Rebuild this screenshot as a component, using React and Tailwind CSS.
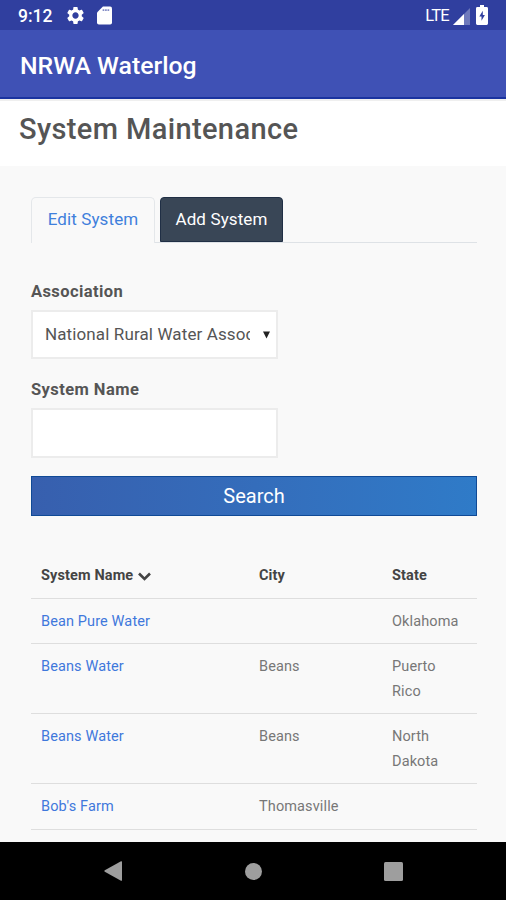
import React, { useState } from "react";
import { MdSettings } from "react-icons/md";

const systems = [
  { name: "Bean Pure Water", city: "", state: "Oklahoma" },
  { name: "Beans Water", city: "Beans", state: "Puerto Rico" },
  { name: "Beans Water", city: "Beans", state: "North Dakota" },
  { name: "Bob's Farm", city: "Thomasville", state: "" },
];

const StatusBar = () => (
  <div className="h-[30px] shrink-0 bg-[#303f9f] pl-[18px] pr-[18px] flex items-center justify-between text-white">
    <div className="flex items-center">
      <span className="w-[47px] pt-[3px] text-[17.5px] leading-none font-medium">9:12</span>
      <MdSettings className="w-[21px] h-[21px]" />
      <svg className="ml-[11px] w-[15px] h-[19px]" viewBox="0 0 16 20">
        <path
          fill="currentColor"
          d="M6.3 0.5H14a2 2 0 0 1 2 2v15a2 2 0 0 1-2 2H2a2 2 0 0 1-2-2V6.8z"
        />
        <path stroke="#303f9f" strokeOpacity="0.6" strokeWidth="1.8" strokeDasharray="1.8 0.8" d="M6 4.300h7.500" />
      </svg>
    </div>
    <div className="flex items-center">
      <span className="pt-[2px] text-[16.5px] leading-none tracking-[-0.7px]">LTE</span>
      <svg className="ml-[4px] mt-[2px] w-[17px] h-[17px]" viewBox="0 0 17 17">
        <path fill="#ffffff" fillOpacity="0.3" d="M17 0v17H0z" />
        <path fill="#ffffff" d="M11 6v11H0z" />
      </svg>
      <svg className="ml-[6px] w-[12px] h-[20px]" viewBox="0 0 12 20">
        <path
          fill="currentColor"
          fillRule="evenodd"
          d="M4 0h4v2h2.6A1.4 1.4 0 0 1 12 3.4v15.2a1.4 1.4 0 0 1-1.4 1.4H1.4A1.4 1.4 0 0 1 0 18.600V3.400A1.400 1.400 0 0 1 1.400 2H4zM6.800 5.800L3.300 11.500h2.200v4.200l3.400-5.700H6.800z"
        />
      </svg>
    </div>
  </div>
);

const NavBar = () => (
  <div className="h-[58px] shrink-0 bg-black px-[103px] flex items-center justify-between text-[#9e9e9e]">
    <svg className="w-[20px] h-[22px]" viewBox="0 0 20 22">
      <path fill="currentColor" d="M18 1.300Q19 0.800 19 2v18q0 1.200-1 0.700L1.800 11.700q-1.200-0.700 0-1.400z" />
    </svg>
    <div className="w-[17px] h-[17px] rounded-full bg-[#9e9e9e]" />
    <div className="w-[19px] h-[19px] rounded-[1.500px] bg-[#9e9e9e]" />
  </div>
);

const App = () => {
  const [tab, setTab] = useState("edit");
  const [systemName, setSystemName] = useState("");

  return (
    <div className="w-full max-w-[506px] h-[900px] overflow-hidden flex flex-col bg-[#f9f9f9] font-['Roboto',sans-serif]">
      <StatusBar />

      {/* App bar */}
      <header className="h-[69px] shrink-0 bg-[#3f51b5] border-b-2 border-[#1a33a0] pl-5 flex items-center">
        <span className="text-[24.800px] font-medium text-white pt-[5px]">NRWA Waterlog</span>
      </header>

      {/* Page title */}
      <div className="h-[67px] shrink-0 bg-white border-t-2 border-[#efefef] pl-[19px] pt-[6px]">
        <h1 className="text-[29px] leading-[44px] tracking-[0.370px] font-medium text-[#555555]">System Maintenance</h1>
      </div>

      <main className="flex-1 min-h-0 overflow-hidden px-[31px] pr-[29px] pt-[31px]">
        {/* Tabs */}
        <div className="flex h-[46px] border-b border-[#dee2e6]">
          <button
            onClick={() => setTab("edit")}
            aria-selected={tab === "edit"}
            className="w-[124px] h-[46px] pb-[2px] rounded-t-[5px] border border-b-0 border-[#e4e7ea] bg-[#f9f9f9] text-[#3f80dc] text-[17px] tracking-[0.120px]"
          >
            Edit System
          </button>
          <button
            onClick={() => setTab("add")}
            aria-selected={tab === "add"}
            className="ml-[5px] w-[123px] h-[45px] rounded-t-[4px] border border-[#202f45] bg-[#394656] text-white text-[17px] tracking-[0.120px]"
          >
            Add System
          </button>
        </div>

        {/* Search form */}
        <label className="block mt-[36px] h-[31px] leading-[25px] text-[16.500px] font-bold tracking-[0.400px] text-[#555555]">
          Association
        </label>
        <div className="w-[247px] h-[49px] bg-white border-2 border-[#ececec] pl-[12px] pr-[6px] flex items-center justify-between">
          <span className="w-[205px] overflow-hidden whitespace-nowrap text-[17px] tracking-[0.120px] text-[#555555]">
            National Rural Water Association
          </span>
          <svg className="w-[7px] h-[8px]" viewBox="0 0 7 8">
            <path fill="#222222" d="M0 0.500h7L3.500 7.500z" />
          </svg>
        </div>

        <label className="block mt-[18px] h-[31px] leading-[25px] text-[16.500px] font-bold tracking-[0.430px] text-[#555555]">
          System Name
        </label>
        <input
          value={systemName}
          onChange={(e) => setSystemName(e.target.value)}
          className="block w-[247px] h-[50px] bg-white border-2 border-[#ececec] px-3 text-[17px] outline-none"
        />

        <button className="mt-[18px] block w-full h-[40px] border border-[#104a96] bg-linear-to-r from-[#375fae] to-[#2f7bc8] text-white text-[20px]">
          Search
        </button>

        {/* Results */}
        <table className="mt-[37px] w-full table-fixed text-[14.500px] leading-[24.500px] tracking-[0.120px]">
          <thead>
            <tr className="border-b border-[#dedede] text-left text-[#444444]">
              <th className="w-[218px] pl-[10px] pt-[11px] pb-[9px] font-bold">
                <span className="flex items-center">
                  System Name
                  <svg className="ml-[5px] mt-px w-[13px] h-[9px]" viewBox="0 0 13 9">
                    <path fill="none" stroke="#444444" strokeWidth="2.600" d="M1 1.500l5.500 5.500L12 1.500" />
                  </svg>
                </span>
              </th>
              <th className="w-[133px] pl-[10px] pt-[11px] pb-[9px] font-bold">City</th>
              <th className="pl-[10px] pt-[11px] pb-[9px] font-bold">State</th>
            </tr>
          </thead>
          <tbody>
            {systems.map((system, i) => (
              <tr key={i} className="border-b border-[#dedede] align-top text-[#777777]">
                <td className="pl-[10px] pt-[11px] pb-[9px] text-[#3f78dc]">{system.name}</td>
                <td className="pl-[10px] pt-[11px]">{system.city}</td>
                <td className="pl-[10px] pr-[10px] pt-[11px] pb-[9px]">{system.state}</td>
              </tr>
            ))}
          </tbody>
        </table>
      </main>

      <NavBar />
    </div>
  );
};

export default App;
